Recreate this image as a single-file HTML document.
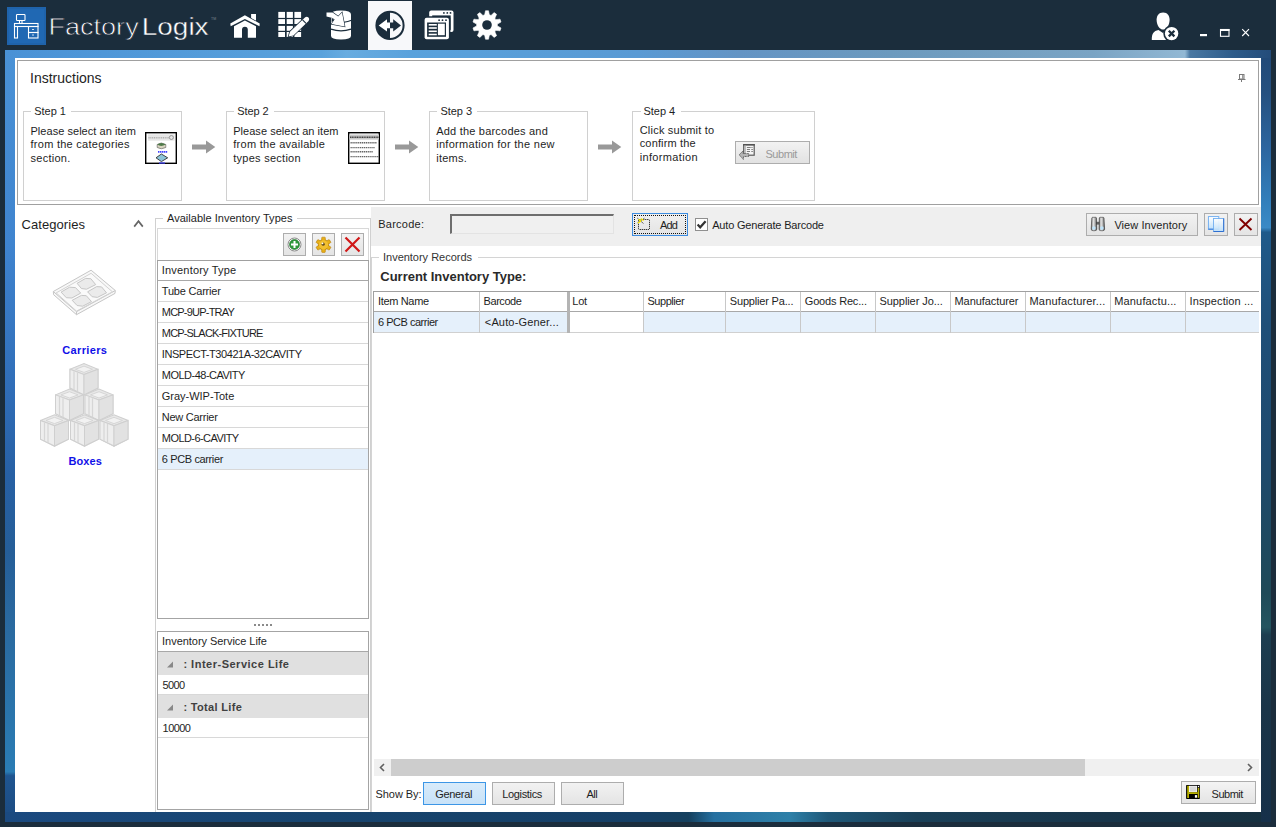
<!DOCTYPE html>
<html><head><meta charset="utf-8">
<style>
*{box-sizing:border-box;margin:0;padding:0}
html,body{width:1276px;height:827px;overflow:hidden;background:#1b2d3c;font-family:"Liberation Sans",sans-serif;font-size:11px;color:#1e1e1e;position:relative}
.a{position:absolute}
.t{position:absolute;white-space:nowrap;line-height:1}
svg{position:absolute;overflow:visible}
</style></head><body>
<div class="a" style="left:5px;top:50px;width:1266px;height:8px;background:linear-gradient(90deg,#4a92d6 0%,#5aa2dc 25%,#68ace0 27%,#5aa2dc 32%,#5a9ad4 50%,#6494c4 58%,#6c9abe 70%,#7aa4c4 86%,#92b8d4 93.2%,#4a78a2 93.6%,#2e5c8a 97%,#244c7a 100%)"></div>
<div class="a" style="left:5px;top:50px;width:10px;height:772px;background:linear-gradient(180deg,#4a92d6 0%,#3f84cf 25%,#2f6cb6 45%,#2760a4 55%,#255e98 65%,#2a6aa0 75%,#2a7cb4 93.5%,#1f5590 94%,#1b4a80 100%)"></div>
<div class="a" style="left:5px;top:812px;width:1266px;height:10px;background:linear-gradient(90deg,#1b4a80 0%,#17446e 25%,#153f66 50%,#15405e 54%,#2670a0 56%,#2e80a8 62%,#1f5878 65%,#1a4058 72%,#18354a 87%,#16303f 100%)"></div>
<div class="a" style="left:1261px;top:58px;width:10px;height:764px;background:linear-gradient(180deg,#224a78 0%,#25507f 4.5%,#2c66a0 12%,#3380bc 19%,#3a8ac6 22.2%,#1f5a8a 22.8%,#1f4f78 35%,#1e4a6e 52%,#1f4a58 70%,#245560 74.5%,#1d3e50 75.5%,#1a3548 85%,#16304a 100%)"></div>
<div class="a" style="left:15px;top:58px;width:1246px;height:754px;background:#fff"></div>
<!-- title bar -->
<svg class="a" style="left:0;top:0" width="1276" height="50" viewBox="0 0 1276 50">
 <rect x="7" y="7" width="39" height="38" fill="#1f63ab"/>
 <rect x="9" y="9" width="35" height="34" fill="#2068b3"/>
 <g fill="none" stroke="#fff" stroke-width="1.1">
  <rect x="16.5" y="14.5" width="8.5" height="6" rx="0.8"/>
  <path d="M19.5,20.5 v2.5 M22,20.5 v2.5"/>
  <rect x="14.5" y="23.5" width="23.5" height="3"/>
  <rect x="14.5" y="26.5" width="3" height="11.5"/>
  <rect x="28.5" y="26.5" width="9.5" height="6"/>
  <rect x="28.5" y="32.5" width="9.5" height="5.5"/>
 </g>
 <path d="M32,29.5 h2 M32,35 h2" stroke="#cfe0f0" stroke-width="1"/>
 <text transform="translate(48.4,35) scale(1.097,1)" font-family="Liberation Sans" font-size="24.7" fill="#ffffff" stroke="#1b2d3c" stroke-width="0.75" style="paint-order:fill stroke">Factory</text>
 <text transform="translate(141.7,35) scale(1.134,1)" font-family="Liberation Sans" font-size="24.7" fill="#ffffff" stroke="#1b2d3c" stroke-width="0.4" style="paint-order:fill stroke">Logix</text>
 <text x="211" y="20" font-family="Liberation Sans" font-size="3.5" fill="#7a8690">TM</text>
 <!-- home -->
 <g fill="#fff">
  <path d="M251.1,14 H256 V21.3 L251.1,18.5 Z"/>
  <path d="M230.3,23.4 L244.9,15.2 L259.7,23.6 L259.5,26.3 L244.9,18.9 L230.7,26.3 Z" stroke="#1b2d3c" stroke-width="1.3" style="paint-order:stroke fill"/>
  <path d="M234,26.3 L244.9,20.4 L256,26.3 L256,37.8 L247.8,37.8 L247.8,29.6 A2.9,2.9 0 0 0 242,29.6 L242,37.8 L234,37.8 Z"/>
 </g>
 <!-- grid edit -->
 <g fill="#fff">
  <rect x="278.3" y="11.9" width="6.7" height="6"/><rect x="286.7" y="11.9" width="6.2" height="6"/><rect x="294.4" y="11.9" width="6.7" height="6"/>
  <rect x="278.3" y="19.1" width="6.7" height="4.9"/><rect x="286.7" y="19.1" width="6.2" height="4.9"/><rect x="294.4" y="19.1" width="6.7" height="4.9"/>
  <rect x="278.3" y="25.9" width="6.7" height="4.9"/><rect x="286.7" y="25.9" width="6.2" height="4.9"/><rect x="294.4" y="25.9" width="6.7" height="4.9"/>
  <rect x="278.3" y="32" width="6.7" height="5"/><rect x="286.7" y="32" width="6.2" height="5"/><rect x="294.4" y="32" width="6.7" height="5"/>
 </g>
 <path d="M288.6,36.6 L290,31.8 L305.2,17.3 A2.5,2.5 0 0 1 308.6,20.9 L293.4,35.4 Z" fill="#fff" stroke="#1b2d3c" stroke-width="1.6" style="paint-order:stroke fill"/>
 <path d="M302.6,19.8 L306,23.3" stroke="#1b2d3c" stroke-width="1.1"/>
 <!-- db -->
 <path d="M331,14.2 Q331,10.4 341,10.4 Q351,10.4 351,14.2 V35.8 Q351,39.6 341,39.6 Q331,39.6 331,35.8 Z" fill="#fff"/>
 <path d="M331,29.1 Q341,32.6 351,29.1" stroke="#1b2d3c" stroke-width="1.3" fill="none"/>
 <path d="M343.8,22.3 Q348,21.8 351.5,20.3" stroke="#1b2d3c" stroke-width="1.1" fill="none"/>
 <path d="M326.5,12.6 L332.5,12.4 L338.2,16.6 L342,12.6 L344.7,26.6 L331.5,24.1 L334.6,19.6 L332.6,18 L326.5,16.4 Z" fill="#fff" stroke="#1b2d3c" stroke-width="1.2" style="paint-order:stroke fill"/>
 <path d="M331.6,18.6 L334.3,19.8 L331.6,22.4 Z" fill="#1b2d3c"/>
 <!-- active tab -->
 <rect x="368" y="1" width="44" height="49" fill="#f7f8fa"/>
 <circle cx="390" cy="25.4" r="13.6" fill="none" stroke="#1b2d3c" stroke-width="2"/>
 <path d="M390,11.8 A13.6,13.6 0 0 0 390,39 Z" fill="#1b2d3c"/>
 <path d="M378.7,25.4 L387,19.2 L387,22.6 L390,22.6 L390,28.2 L387,28.2 L387,31.6 Z" fill="#fff"/>
 <path d="M401,25.4 L393.2,19.2 L393.2,22.6 L390,22.6 L390,28.2 L393.2,28.2 L393.2,31.6 Z" fill="#1b2d3c"/>
 <!-- windows -->
 <path d="M431.2,10.4 H451.5 A2,2 0 0 1 453.5,12.4 V30 A2,2 0 0 1 451.5,32 H429.2 V12.4 A2,2 0 0 1 431.2,10.4 Z" fill="#fff"/>
 <rect x="432.2" y="15.4" width="18.5" height="14.5" fill="#1b2d3c"/>
 <circle cx="443.9" cy="12.9" r="0.9" fill="#1b2d3c"/><circle cx="447.3" cy="12.9" r="0.9" fill="#1b2d3c"/><circle cx="450.5" cy="12.9" r="0.9" fill="#1b2d3c"/>
 <rect x="423" y="16.2" width="27.4" height="24.6" rx="2.5" fill="#1b2d3c"/>
 <rect x="424.6" y="17.7" width="24.3" height="21.6" rx="2" fill="#fff"/>
 <rect x="427.1" y="22.5" width="18.9" height="14.3" fill="#1b2d3c"/>
 <circle cx="439.1" cy="20.2" r="0.9" fill="#1b2d3c"/><circle cx="442.5" cy="20.2" r="0.9" fill="#1b2d3c"/><circle cx="446" cy="20.2" r="0.9" fill="#1b2d3c"/>
 <g fill="#fff"><rect x="428.7" y="24" width="8.1" height="1.6"/><rect x="428.7" y="27.2" width="8.1" height="1.6"/><rect x="428.7" y="30.5" width="8.1" height="1.6"/><rect x="428.7" y="33.7" width="8.1" height="1.6"/><rect x="437.9" y="23.7" width="6.9" height="11.5"/></g>
 <!-- gear -->
 <path d="M484.66,14.87 L485.51,10.78 L488.49,10.78 L489.34,14.87 L491.06,15.43 L494.15,12.62 L496.57,14.37 L494.85,18.18 L495.91,19.64 L500.06,19.18 L500.99,22.03 L497.36,24.09 L497.36,25.91 L500.99,27.97 L500.06,30.82 L495.91,30.36 L494.85,31.82 L496.57,35.63 L494.15,37.38 L491.06,34.57 L489.34,35.13 L488.49,39.22 L485.51,39.22 L484.66,35.13 L482.94,34.57 L479.85,37.38 L477.43,35.63 L479.15,31.82 L478.09,30.36 L473.94,30.82 L473.01,27.97 L476.64,25.91 L476.64,24.09 L473.01,22.03 L473.94,19.18 L478.09,19.64 L479.15,18.18 L477.43,14.37 L479.85,12.62 L482.94,15.43 Z" fill="#fff" stroke="#fff" stroke-width="0.6" stroke-linejoin="round"/>
 <circle cx="487" cy="25" r="4.8" fill="#1b2d3c"/>
 <!-- user -->
 <g fill="#fff">
  <path d="M1163.1,12.6 C1167.6,12.6 1169.6,16 1169.6,20 C1169.6,25 1166.6,29.6 1163.1,29.6 C1159.6,29.6 1156.6,25 1156.6,20 C1156.6,16 1158.6,12.6 1163.1,12.6 Z"/>
  <path d="M1151.8,40 C1151.8,33.5 1153.5,31 1158.5,30 L1163,33 L1167.5,30 C1172,31 1174,33 1174,40 Z"/>
 </g>
 <circle cx="1171.6" cy="33.6" r="8.3" fill="#1b2d3c"/>
 <circle cx="1171.6" cy="33.6" r="6.7" fill="#fff"/>
 <path d="M1168.8,30.8 L1174.4,36.4 M1174.4,30.8 L1168.8,36.4" stroke="#1b2d3c" stroke-width="2.3"/>
 <!-- window controls -->
 <rect x="1200" y="34" width="7" height="2.2" fill="#fff"/>
 <rect x="1220.5" y="29.5" width="8.5" height="6.8" fill="none" stroke="#fff" stroke-width="1.1"/>
 <rect x="1220" y="29" width="9.5" height="2" fill="#fff"/>
 <path d="M1242.2,29.2 L1249,36 M1249,29.2 L1242.2,36" stroke="#fff" stroke-width="1.1"/>
</svg>
<div class="a" style="left:17px;top:60px;width:1242px;height:145px;border:1px solid #a0a0a0;"></div>
<div class="t" style="left:30.00px;top:71px;font-size:14px;color:#1e1e1e;letter-spacing:0.000px;">Instructions</div>
<svg style="left:1230px;top:55px" width="36" height="36" viewBox="1230 55 36 36"><rect x="1239.5" y="74.5" width="4.5" height="4.5" fill="#fff" stroke="#7a7a7a"/><rect x="1242" y="75" width="1.5" height="4" fill="#9a9a9a"/><rect x="1238" y="79" width="7.5" height="1" fill="#7a7a7a"/><rect x="1241" y="80" width="1" height="2" fill="#7a7a7a"/></svg>
<div class="a" style="left:23px;top:111px;width:159px;height:1px;background:#d0d0d0"></div>
<div class="a" style="left:23px;top:111px;width:1px;height:90px;background:#d0d0d0"></div>
<div class="a" style="left:181px;top:111px;width:1px;height:90px;background:#d0d0d0"></div>
<div class="a" style="left:23px;top:200px;width:159px;height:1px;background:#d0d0d0"></div>
<div class="a" style="left:31px;top:110px;width:40px;height:3px;background:#fff"></div>
<div class="t" style="left:34.30px;top:106px;font-size:11px;color:#1e1e1e;letter-spacing:-0.060px;">Step 1</div>
<div class="t" style="left:30.50px;top:126px;font-size:11px;color:#1e1e1e;letter-spacing:0.037px;">Please select an item</div>
<div class="t" style="left:30.50px;top:139px;font-size:11px;color:#1e1e1e;letter-spacing:0.269px;">from the categories</div>
<div class="t" style="left:30.50px;top:153px;font-size:11px;color:#1e1e1e;letter-spacing:0.257px;">section.</div>
<div class="a" style="left:226px;top:111px;width:159px;height:1px;background:#d0d0d0"></div>
<div class="a" style="left:226px;top:111px;width:1px;height:90px;background:#d0d0d0"></div>
<div class="a" style="left:384px;top:111px;width:1px;height:90px;background:#d0d0d0"></div>
<div class="a" style="left:226px;top:200px;width:159px;height:1px;background:#d0d0d0"></div>
<div class="a" style="left:234px;top:110px;width:40px;height:3px;background:#fff"></div>
<div class="t" style="left:237.20px;top:106px;font-size:11px;color:#1e1e1e;letter-spacing:-0.060px;">Step 2</div>
<div class="t" style="left:233.20px;top:126px;font-size:11px;color:#1e1e1e;letter-spacing:0.037px;">Please select an item</div>
<div class="t" style="left:233.20px;top:139px;font-size:11px;color:#1e1e1e;letter-spacing:0.285px;">from the available</div>
<div class="t" style="left:233.20px;top:153px;font-size:11px;color:#1e1e1e;letter-spacing:0.267px;">types section</div>
<div class="a" style="left:429px;top:111px;width:159px;height:1px;background:#d0d0d0"></div>
<div class="a" style="left:429px;top:111px;width:1px;height:90px;background:#d0d0d0"></div>
<div class="a" style="left:587px;top:111px;width:1px;height:90px;background:#d0d0d0"></div>
<div class="a" style="left:429px;top:200px;width:159px;height:1px;background:#d0d0d0"></div>
<div class="a" style="left:437px;top:110px;width:40px;height:3px;background:#fff"></div>
<div class="t" style="left:440.50px;top:106px;font-size:11px;color:#1e1e1e;letter-spacing:-0.060px;">Step 3</div>
<div class="t" style="left:436.20px;top:126px;font-size:11px;color:#1e1e1e;letter-spacing:0.208px;">Add the barcodes and</div>
<div class="t" style="left:436.20px;top:139px;font-size:11px;color:#1e1e1e;letter-spacing:0.293px;">information for the new</div>
<div class="t" style="left:436.20px;top:153px;font-size:11px;color:#1e1e1e;letter-spacing:0.270px;">items.</div>
<div class="a" style="left:632px;top:111px;width:183px;height:1px;background:#d0d0d0"></div>
<div class="a" style="left:632px;top:111px;width:1px;height:90px;background:#d0d0d0"></div>
<div class="a" style="left:814px;top:111px;width:1px;height:90px;background:#d0d0d0"></div>
<div class="a" style="left:632px;top:200px;width:183px;height:1px;background:#d0d0d0"></div>
<div class="a" style="left:641px;top:110px;width:40px;height:3px;background:#fff"></div>
<div class="t" style="left:643.60px;top:106px;font-size:11px;color:#1e1e1e;letter-spacing:-0.060px;">Step 4</div>
<div class="t" style="left:639.70px;top:125px;font-size:11px;color:#1e1e1e;letter-spacing:0.214px;">Click submit to</div>
<div class="t" style="left:639.70px;top:138px;font-size:11px;color:#1e1e1e;letter-spacing:0.160px;">confirm the</div>
<div class="t" style="left:639.70px;top:152px;font-size:11px;color:#1e1e1e;letter-spacing:0.340px;">information</div>
<svg style="left:192px;top:140px" width="24" height="14" viewBox="0 0 24 14"><path d="M0,4.5 H14 V0.5 L23.3,7 L14,13.5 V9.5 H0 Z" fill="#999"/></svg>
<svg style="left:395px;top:140px" width="24" height="14" viewBox="0 0 24 14"><path d="M0,4.5 H14 V0.5 L23.3,7 L14,13.5 V9.5 H0 Z" fill="#999"/></svg>
<svg style="left:598px;top:140px" width="24" height="14" viewBox="0 0 24 14"><path d="M0,4.5 H14 V0.5 L23.3,7 L14,13.5 V9.5 H0 Z" fill="#999"/></svg>
<svg style="left:145px;top:132px" width="32" height="32" viewBox="0 0 32 32">
<rect x="0.7" y="0.7" width="30.6" height="30.6" fill="#fff" stroke="#000" stroke-width="1.4"/>
<rect x="3" y="2.3" width="26.6" height="6.4" fill="#e6e6e6"/>
<path d="M3.5,5.8 H24" stroke="#b0b0b0" stroke-width="1.6" stroke-dasharray="1.1 0.7"/>
<circle cx="26.4" cy="5.5" r="2" fill="none" stroke="#888" stroke-width="0.8"/>
<path d="M12.2,12.5 Q16,9.5 20.8,12.5 L20.8,15.5 Q16,18 12.2,15.5 Z" fill="#d8d4c0" stroke="#555" stroke-width="0.6"/>
<path d="M12.2,12.5 Q16,9.3 20.8,12.5 Q16,15.3 12.2,12.5 Z" fill="#4f7a4a"/>
<path d="M13,19.8 H22.7" stroke="#4040ff" stroke-width="1.8" stroke-dasharray="1.4 0.5"/>
<path d="M11,25.8 L16.4,22 L22.7,25.8 L16.4,29.6 Z" fill="#8cc4d8" stroke="#333" stroke-width="0.9"/>
<path d="M14,31 H20" stroke="#4040ff" stroke-width="1.2"/>
</svg>
<svg style="left:348px;top:132px" width="32" height="32" viewBox="0 0 32 32">
<rect x="0.7" y="0.7" width="30.6" height="30.6" fill="#fff" stroke="#000" stroke-width="1.4"/>
<rect x="1.4" y="2.5" width="29.6" height="5.1" fill="#c8c8c8"/>
<path d="M2,5.2 H31" stroke="#444" stroke-width="1.5" stroke-dasharray="1.2 0.5"/>
<path d="M2.5,10.8 H28.7 M2.5,15.6 H27 M2.5,19.7 H25 M2.5,24.6 H31" stroke="#666" stroke-width="1.4" stroke-dasharray="1.3 0.6"/>
</svg>
<div class="a" style="left:735px;top:141px;width:75px;height:23px;border:1px solid #adadad;background:linear-gradient(#f2f2f2,#e2e2e2)"></div>
<svg style="left:734px;top:140px" width="26" height="26" viewBox="734 140 26 26">
<rect x="743.7" y="144.7" width="10.5" height="10.5" fill="#f4f4f4" stroke="#5a5a5a" stroke-width="1.2"/>
<rect x="743.1" y="144.1" width="11.7" height="1.4" fill="#505050"/>
<rect x="744.3" y="145.5" width="1.5" height="8" fill="#b0b0b0"/>
<path d="M746.9,147.5 H750.7 M751.4,147.5 H752.6 M746.9,149.5 H750 M751.3,149.5 H752.9 M746.9,151.5 H750 M751.3,151.5 H752.9" stroke="#707070" stroke-width="0.9"/>
<path d="M739.2,154.8 L743.1,150.8 V153.5 H748.6 V156.5 H743.4 V159.6 Z" fill="#b4b4b4" stroke="#404040" stroke-width="0.8" stroke-dasharray="0.9 0.6"/>
</svg>
<div class="t" style="left:765.50px;top:149px;font-size:11px;color:#9a9a9a;letter-spacing:-0.470px;">Submit</div>
<div class="t" style="left:21.50px;top:218px;font-size:13px;color:#1e1e1e;letter-spacing:0.072px;">Categories</div>
<svg style="left:133px;top:219px" width="12" height="9" viewBox="0 0 12 9"><path d="M1.2,7.6 L5.5,2.2 L9.8,7.6" fill="none" stroke="#666" stroke-width="1.7"/></svg>
<svg style="left:50px;top:266px" width="70" height="54" viewBox="50 266 70 54">
<g stroke="#c6c6c6" stroke-width="1" stroke-linejoin="round">
<path d="M53.3,291.5 L91.1,270.2 L115.3,290.5 L115,293.4 L76.5,314.7 L53.6,294.7 Z" fill="#f8f8f8"/>
<path d="M53.3,291.5 L76.5,311.7 L115.3,290.5" fill="none"/>
<path d="M76.5,311.7 V314.7" fill="none"/>
<path d="M56.2,292.9 L91.1,273.3 L112.4,291.8 L76.5,311.1 Z" fill="#fafafa" stroke="#d2d2d2"/>
<path d="M77.1,283.3 L85.6,278.4 L90.8,278.7 L95.7,284.6 L86.6,289.2 L81.4,288.5 Z" fill="#ebebeb"/>
<path d="M61.1,292.1 L69.6,287.2 L75.5,287.6 L80.7,293.1 L71.9,298 L66.3,297.7 Z" fill="#ebebeb"/>
<path d="M87.6,291.8 L96.7,286.6 L101.6,286.9 L106.5,292.8 L97.4,297.4 L92.1,296.7 Z" fill="#ebebeb"/>
<path d="M72.2,300.3 L81.4,295.4 L86.3,295.7 L91.5,301.6 L82.7,306.2 L77.1,305.5 Z" fill="#ebebeb"/>
</g>
</svg>
<div class="t" style="left:62.30px;top:345px;font-size:11px;color:#1010e8;font-weight:bold;letter-spacing:0.343px;transform:scaleY(1.05);transform-origin:0 100%">Carriers</div>
<svg style="left:39px;top:362px" width="92" height="88" viewBox="39 362 92 88"><g transform="translate(0,363) scale(1,1.045) translate(0,-363)"><g transform="translate(69.5,363)">
<path d="M0.5,6 L14.5,0.5 L28.5,6 L28.5,24 L14.5,30.5 L0.5,24 Z" fill="#e8e8e8" stroke="#cfcfcf" stroke-width="1"/>
<path d="M0.5,6 L14.5,11 L28.5,6" fill="none" stroke="#d0d0d0" stroke-width="1"/>
<path d="M14.5,11 V30.5" stroke="#d4d4d4" stroke-width="1"/>
<path d="M0.5,6 L14.5,11 L14.5,30.5 L0.5,24 Z" fill="#eeeeee" stroke="#cfcfcf" stroke-width="1"/>
<path d="M14.5,11 L28.5,6 L28.5,24 L14.5,30.5 Z" fill="#e2e2e2" stroke="#cfcfcf" stroke-width="1"/>
<path d="M4.5,8 V26 M8,9.3 V27.6" stroke="#d6d6d6" stroke-width="1.2"/>
<path d="M6,6 L14.5,3 L23,6 L14.5,9 Z" fill="#f2f2f2" stroke="#d0d0d0" stroke-width="0.8"/>
</g><g transform="translate(55,387.5)">
<path d="M0.5,6 L14.5,0.5 L28.5,6 L28.5,24 L14.5,30.5 L0.5,24 Z" fill="#e8e8e8" stroke="#cfcfcf" stroke-width="1"/>
<path d="M0.5,6 L14.5,11 L28.5,6" fill="none" stroke="#d0d0d0" stroke-width="1"/>
<path d="M14.5,11 V30.5" stroke="#d4d4d4" stroke-width="1"/>
<path d="M0.5,6 L14.5,11 L14.5,30.5 L0.5,24 Z" fill="#eeeeee" stroke="#cfcfcf" stroke-width="1"/>
<path d="M14.5,11 L28.5,6 L28.5,24 L14.5,30.5 Z" fill="#e2e2e2" stroke="#cfcfcf" stroke-width="1"/>
<path d="M4.5,8 V26 M8,9.3 V27.6" stroke="#d6d6d6" stroke-width="1.2"/>
<path d="M6,6 L14.5,3 L23,6 L14.5,9 Z" fill="#f2f2f2" stroke="#d0d0d0" stroke-width="0.8"/>
</g><g transform="translate(84.5,387.5)">
<path d="M0.5,6 L14.5,0.5 L28.5,6 L28.5,24 L14.5,30.5 L0.5,24 Z" fill="#e8e8e8" stroke="#cfcfcf" stroke-width="1"/>
<path d="M0.5,6 L14.5,11 L28.5,6" fill="none" stroke="#d0d0d0" stroke-width="1"/>
<path d="M14.5,11 V30.5" stroke="#d4d4d4" stroke-width="1"/>
<path d="M0.5,6 L14.5,11 L14.5,30.5 L0.5,24 Z" fill="#eeeeee" stroke="#cfcfcf" stroke-width="1"/>
<path d="M14.5,11 L28.5,6 L28.5,24 L14.5,30.5 Z" fill="#e2e2e2" stroke="#cfcfcf" stroke-width="1"/>
<path d="M4.5,8 V26 M8,9.3 V27.6" stroke="#d6d6d6" stroke-width="1.2"/>
<path d="M6,6 L14.5,3 L23,6 L14.5,9 Z" fill="#f2f2f2" stroke="#d0d0d0" stroke-width="0.8"/>
</g><g transform="translate(40,412)">
<path d="M0.5,6 L14.5,0.5 L28.5,6 L28.5,24 L14.5,30.5 L0.5,24 Z" fill="#e8e8e8" stroke="#cfcfcf" stroke-width="1"/>
<path d="M0.5,6 L14.5,11 L28.5,6" fill="none" stroke="#d0d0d0" stroke-width="1"/>
<path d="M14.5,11 V30.5" stroke="#d4d4d4" stroke-width="1"/>
<path d="M0.5,6 L14.5,11 L14.5,30.5 L0.5,24 Z" fill="#eeeeee" stroke="#cfcfcf" stroke-width="1"/>
<path d="M14.5,11 L28.5,6 L28.5,24 L14.5,30.5 Z" fill="#e2e2e2" stroke="#cfcfcf" stroke-width="1"/>
<path d="M4.5,8 V26 M8,9.3 V27.6" stroke="#d6d6d6" stroke-width="1.2"/>
<path d="M6,6 L14.5,3 L23,6 L14.5,9 Z" fill="#f2f2f2" stroke="#d0d0d0" stroke-width="0.8"/>
</g><g transform="translate(70,412)">
<path d="M0.5,6 L14.5,0.5 L28.5,6 L28.5,24 L14.5,30.5 L0.5,24 Z" fill="#e8e8e8" stroke="#cfcfcf" stroke-width="1"/>
<path d="M0.5,6 L14.5,11 L28.5,6" fill="none" stroke="#d0d0d0" stroke-width="1"/>
<path d="M14.5,11 V30.5" stroke="#d4d4d4" stroke-width="1"/>
<path d="M0.5,6 L14.5,11 L14.5,30.5 L0.5,24 Z" fill="#eeeeee" stroke="#cfcfcf" stroke-width="1"/>
<path d="M14.5,11 L28.5,6 L28.5,24 L14.5,30.5 Z" fill="#e2e2e2" stroke="#cfcfcf" stroke-width="1"/>
<path d="M4.5,8 V26 M8,9.3 V27.6" stroke="#d6d6d6" stroke-width="1.2"/>
<path d="M6,6 L14.5,3 L23,6 L14.5,9 Z" fill="#f2f2f2" stroke="#d0d0d0" stroke-width="0.8"/>
</g><g transform="translate(99.5,412)">
<path d="M0.5,6 L14.5,0.5 L28.5,6 L28.5,24 L14.5,30.5 L0.5,24 Z" fill="#e8e8e8" stroke="#cfcfcf" stroke-width="1"/>
<path d="M0.5,6 L14.5,11 L28.5,6" fill="none" stroke="#d0d0d0" stroke-width="1"/>
<path d="M14.5,11 V30.5" stroke="#d4d4d4" stroke-width="1"/>
<path d="M0.5,6 L14.5,11 L14.5,30.5 L0.5,24 Z" fill="#eeeeee" stroke="#cfcfcf" stroke-width="1"/>
<path d="M14.5,11 L28.5,6 L28.5,24 L14.5,30.5 Z" fill="#e2e2e2" stroke="#cfcfcf" stroke-width="1"/>
<path d="M4.5,8 V26 M8,9.3 V27.6" stroke="#d6d6d6" stroke-width="1.2"/>
<path d="M6,6 L14.5,3 L23,6 L14.5,9 Z" fill="#f2f2f2" stroke="#d0d0d0" stroke-width="0.8"/>
</g></g></svg>
<div class="t" style="left:68.50px;top:456px;font-size:11px;color:#1010e8;font-weight:bold;letter-spacing:0.075px;transform:scaleY(1.05);transform-origin:0 100%">Boxes</div>
<div class="a" style="left:155px;top:218px;width:8px;height:1px;background:#d0d0d0"></div>
<div class="a" style="left:297px;top:218px;width:74px;height:1px;background:#d0d0d0"></div>
<div class="a" style="left:155px;top:218px;width:1px;height:594px;background:#d0d0d0"></div>
<div class="a" style="left:370px;top:218px;width:1px;height:594px;background:#d0d0d0"></div>
<div class="t" style="left:167.00px;top:213px;font-size:11px;color:#1e1e1e;letter-spacing:0.019px;">Available Inventory Types</div>
<div class="a" style="left:157px;top:228px;width:212px;height:1px;background:#d8d8d8"></div>
<div class="a" style="left:157px;top:228px;width:1px;height:33px;background:#d8d8d8"></div>
<div class="a" style="left:368px;top:228px;width:1px;height:33px;background:#d8d8d8"></div>
<div class="a" style="left:283px;top:233px;width:23px;height:23px;border:1px solid #adadad;background:linear-gradient(#f2f2f2,#e4e4e4)"></div>
<div class="a" style="left:312px;top:233px;width:23px;height:23px;border:1px solid #adadad;background:linear-gradient(#f2f2f2,#e4e4e4)"></div>
<div class="a" style="left:341px;top:233px;width:23px;height:23px;border:1px solid #adadad;background:linear-gradient(#f2f2f2,#e4e4e4)"></div>
<svg style="left:287px;top:237px" width="15" height="15" viewBox="0 0 15 15">
<circle cx="7.5" cy="7.5" r="6.5" fill="#fff" stroke="#8a8a8a" stroke-width="1"/>
<circle cx="7.5" cy="7.5" r="5" fill="#2f9a3a" stroke="#1f6e28" stroke-width="0.6"/>
<path d="M7.5,4 V11 M4,7.5 H11" stroke="#fff" stroke-width="2"/>
</svg>
<svg style="left:315px;top:236px" width="17" height="17" viewBox="0 0 17 17">
<g transform="translate(8.5,8.8)"><g fill="#e8b018" stroke="#b88008" stroke-width="0.6">
<circle r="5.2"/><rect x="-1.8" y="-7.6" width="3.6" height="15.2" rx="0.6"/><rect x="-1.8" y="-7.6" width="3.6" height="15.2" rx="0.6" transform="rotate(60)"/><rect x="-1.8" y="-7.6" width="3.6" height="15.2" rx="0.6" transform="rotate(120)"/></g>
<circle r="4.6" fill="#f2c030"/><circle cx="-0.3" cy="-0.6" r="1.6" fill="#6a5020"/><circle cx="-1" cy="-1.5" r="0.9" fill="#fff"/></g>
</svg>
<svg style="left:344px;top:236px" width="17" height="17" viewBox="0 0 17 17">
<path d="M1.5,1.5 L15.5,15.5 M15.5,1.5 L1.5,15.5" stroke="#d01818" stroke-width="2.2"/>
</svg>
<div class="a" style="left:157px;top:260px;width:212px;height:359px;border:1px solid #a4a4a4;background:#fff"></div>
<div class="a" style="left:157px;top:260px;width:212px;height:1px;background:#a0a0a0"></div>
<div class="t" style="left:161.80px;top:265px;font-size:11px;color:#1e1e1e;letter-spacing:0.188px;">Inventory Type</div>
<div class="a" style="left:158px;top:280px;width:210px;height:1px;background:#a8a8a8"></div>
<div class="a" style="left:158px;top:301px;width:210px;height:1px;background:#d8d8d8"></div>
<div class="t" style="left:161.80px;top:286px;font-size:11px;color:#1e1e1e;letter-spacing:-0.205px;">Tube Carrier</div>
<div class="a" style="left:158px;top:322px;width:210px;height:1px;background:#d8d8d8"></div>
<div class="t" style="left:161.80px;top:307px;font-size:11px;color:#1e1e1e;letter-spacing:-0.791px;">MCP-9UP-TRAY</div>
<div class="a" style="left:158px;top:343px;width:210px;height:1px;background:#d8d8d8"></div>
<div class="t" style="left:161.80px;top:328px;font-size:11px;color:#1e1e1e;letter-spacing:-0.831px;">MCP-SLACK-FIXTURE</div>
<div class="a" style="left:158px;top:364px;width:210px;height:1px;background:#d8d8d8"></div>
<div class="t" style="left:161.80px;top:349px;font-size:11px;color:#1e1e1e;letter-spacing:-0.435px;">INSPECT-T30421A-32CAVITY</div>
<div class="a" style="left:158px;top:385px;width:210px;height:1px;background:#d8d8d8"></div>
<div class="t" style="left:161.80px;top:370px;font-size:11px;color:#1e1e1e;letter-spacing:-0.512px;">MOLD-48-CAVITY</div>
<div class="a" style="left:158px;top:406px;width:210px;height:1px;background:#d8d8d8"></div>
<div class="t" style="left:161.80px;top:391px;font-size:11px;color:#1e1e1e;letter-spacing:-0.021px;">Gray-WIP-Tote</div>
<div class="a" style="left:158px;top:427px;width:210px;height:1px;background:#d8d8d8"></div>
<div class="t" style="left:161.80px;top:412px;font-size:11px;color:#1e1e1e;letter-spacing:-0.260px;">New Carrier</div>
<div class="a" style="left:158px;top:448px;width:210px;height:1px;background:#d8d8d8"></div>
<div class="t" style="left:161.80px;top:433px;font-size:11px;color:#1e1e1e;letter-spacing:-0.562px;">MOLD-6-CAVITY</div>
<div class="a" style="left:158px;top:449px;width:210px;height:20px;background:#e5f0fb"></div>
<div class="a" style="left:158px;top:469px;width:210px;height:1px;background:#d8d8d8"></div>
<div class="t" style="left:161.80px;top:454px;font-size:11px;color:#1e1e1e;letter-spacing:-0.375px;">6 PCB carrier</div>
<div class="a" style="left:254px;top:624px;width:2px;height:2px;background:#8a8a8a"></div>
<div class="a" style="left:258px;top:624px;width:2px;height:2px;background:#8a8a8a"></div>
<div class="a" style="left:262px;top:624px;width:2px;height:2px;background:#8a8a8a"></div>
<div class="a" style="left:266px;top:624px;width:2px;height:2px;background:#8a8a8a"></div>
<div class="a" style="left:270px;top:624px;width:2px;height:2px;background:#8a8a8a"></div>
<div class="a" style="left:157px;top:631px;width:212px;height:179px;border:1px solid #a4a4a4;background:#fff"></div>
<div class="t" style="left:162.10px;top:636px;font-size:11px;color:#1e1e1e;letter-spacing:-0.043px;">Inventory Service Life</div>
<div class="a" style="left:158px;top:651px;width:210px;height:1px;background:#a8a8a8"></div>
<div class="a" style="left:158px;top:652px;width:210px;height:23px;background:#e0e0e0"></div>
<div class="a" style="left:158px;top:695px;width:210px;height:23px;background:#e0e0e0"></div>
<div class="a" style="left:158px;top:694px;width:210px;height:1px;background:#d8d8d8"></div>
<div class="a" style="left:158px;top:737px;width:210px;height:1px;background:#d8d8d8"></div>
<svg style="left:166px;top:661px" width="8" height="7" viewBox="0 0 8 7"><path d="M7,0.5 V6.5 H1 Z" fill="#888"/></svg>
<div class="t" style="left:183.40px;top:659px;font-size:11px;color:#404040;font-weight:bold;letter-spacing:0.505px;">: Inter-Service Life</div>
<div class="t" style="left:162.60px;top:680px;font-size:11px;color:#1e1e1e;letter-spacing:-0.683px;">5000</div>
<svg style="left:166px;top:704px" width="8" height="7" viewBox="0 0 8 7"><path d="M7,0.5 V6.5 H1 Z" fill="#888"/></svg>
<div class="t" style="left:183.40px;top:702px;font-size:11px;color:#404040;font-weight:bold;letter-spacing:0.336px;">: Total Life</div>
<div class="t" style="left:162.60px;top:723px;font-size:11px;color:#1e1e1e;letter-spacing:-0.575px;">10000</div>
<div class="a" style="left:371px;top:207px;width:890px;height:39px;background:#efefef"></div>
<div class="t" style="left:378.20px;top:219px;font-size:11px;color:#1e1e1e;letter-spacing:0.250px;">Barcode:</div>
<div class="a" style="left:450px;top:214px;width:164px;height:20px;background:#f0f0f0;border-top:2px solid #6e6e6e;border-left:2px solid #6e6e6e;border-right:1px solid #e3e3e3;border-bottom:1px solid #e3e3e3"></div>
<div class="a" style="left:632px;top:213px;width:56px;height:23px;border:1px solid #3c8ce0;background:linear-gradient(#f0f0f0,#e4e4e4)"></div>
<div class="a" style="left:634px;top:215px;width:52px;height:19px;border:1px dotted #111"></div>
<svg style="left:630px;top:210px" width="30" height="28" viewBox="630 210 30 28">
<rect x="638.5" y="219.5" width="11" height="10" rx="0.8" fill="none" stroke="#000" stroke-width="1" stroke-dasharray="1 1"/>
<path d="M637.2,218 L643.5,223.5 M637.5,222.8 L644.5,218.2" stroke="#333" stroke-width="0.7"/>
<path d="M638.5,219.3 L641.2,221.6 M640.8,218.5 L643.6,220.5 M637.8,223 L640.5,221.5" stroke="#ffee00" stroke-width="1.4"/>
</svg>
<div class="t" style="left:660.00px;top:220px;font-size:11px;color:#1e1e1e;letter-spacing:-0.875px;">Add</div>
<div class="a" style="left:695px;top:218px;width:13px;height:13px;border:1px solid #8f8f8f;background:#fff"></div>
<svg style="left:696px;top:219px" width="11" height="11" viewBox="0 0 11 11"><path d="M1.6,5.6 L4.2,8.3 L9.6,2.2" fill="none" stroke="#333" stroke-width="2.2"/></svg>
<div class="t" style="left:712.20px;top:220px;font-size:11px;color:#1e1e1e;letter-spacing:-0.190px;">Auto Generate Barcode</div>
<div class="a" style="left:1086px;top:213px;width:112px;height:23px;border:1px solid #adadad;background:linear-gradient(#f2f2f2,#e4e4e4)"></div>
<svg style="left:1086px;top:212px" width="24" height="24" viewBox="1086 212 24 24">
<defs><linearGradient id="bg1" x1="0" x2="1"><stop offset="0" stop-color="#5a5a5a"/><stop offset="0.35" stop-color="#e8e8e8"/><stop offset="0.7" stop-color="#b0b0b0"/><stop offset="1" stop-color="#3a3a3a"/></linearGradient></defs>
<rect x="1096" y="221.8" width="4" height="2.8" fill="#666"/>
<path d="M1092.6,217.3 H1095.6 Q1096.4,217.3 1096.5,218.3 L1096.8,229 Q1096.8,230.7 1095,230.7 H1093 Q1091.2,230.7 1091.2,229 L1091.8,218.3 Q1091.9,217.3 1092.6,217.3 Z" fill="url(#bg1)" stroke="#3a3a3a" stroke-width="0.6"/>
<path d="M1100.2,217.3 H1103.2 Q1103.9,217.3 1104,218.3 L1104.6,229 Q1104.6,230.7 1102.8,230.7 H1100.8 Q1099,230.7 1099,229 L1099.3,218.3 Q1099.4,217.3 1100.2,217.3 Z" fill="url(#bg1)" stroke="#3a3a3a" stroke-width="0.6"/>
<circle cx="1093.9" cy="228.1" r="1.8" fill="#bfe4fa"/><circle cx="1101.9" cy="228.1" r="1.8" fill="#bfe4fa"/>
</svg>
<div class="t" style="left:1114.40px;top:220px;font-size:11px;color:#1e1e1e;letter-spacing:0.073px;">View Inventory</div>
<div class="a" style="left:1204px;top:213px;width:24px;height:23px;border:1px solid #adadad;background:linear-gradient(#f2f2f2,#e4e4e4)"></div>
<svg style="left:1204px;top:212px" width="24" height="24" viewBox="1204 212 24 24">
<defs><linearGradient id="cg1" x1="0" y1="0" x2="0" y2="1"><stop offset="0" stop-color="#ffffff"/><stop offset="1" stop-color="#bfe0fa"/></linearGradient></defs>
<rect x="1208.4" y="216.6" width="10.4" height="12.8" fill="url(#cg1)" stroke="#6aaaf0" stroke-width="0.9"/>
<rect x="1208.4" y="228.6" width="10.4" height="1" fill="#3a7ad8"/>
<rect x="1213.5" y="218.5" width="10.2" height="13" fill="url(#cg1)" stroke="#6aaaf0" stroke-width="0.9" opacity="0.92"/>
<path d="M1223.7,218.5 V231.5 H1213.5" fill="none" stroke="#2f6fd0" stroke-width="1"/>
</svg>
<div class="a" style="left:1234px;top:213px;width:24px;height:23px;border:1px solid #adadad;background:linear-gradient(#f2f2f2,#e4e4e4)"></div>
<svg style="left:1237px;top:216px" width="17" height="17" viewBox="0 0 17 17"><path d="M2.5,2.5 L14.5,14 M14.5,2.5 L2.5,14" stroke="#800000" stroke-width="1.9"/></svg>
<div class="a" style="left:371px;top:257px;width:8px;height:1px;background:#d4d4d4"></div>
<div class="a" style="left:478px;top:257px;width:783px;height:1px;background:#d4d4d4"></div>
<div class="a" style="left:371px;top:257px;width:1px;height:555px;background:#d4d4d4"></div>
<div class="t" style="left:383.00px;top:252px;font-size:11px;color:#333;letter-spacing:-0.016px;">Inventory Records</div>
<div class="t" style="left:380.30px;top:270px;font-size:13px;color:#2a2a2a;font-weight:bold;letter-spacing:-0.014px;">Current Inventory Type:</div>
<div class="a" style="left:373px;top:291px;width:886px;height:1px;background:#a0a0a0"></div>
<div class="a" style="left:373px;top:291px;width:1px;height:42px;background:#a0a0a0"></div>
<div class="a" style="left:374px;top:311px;width:885px;height:1px;background:#a8a8a8"></div>
<div class="a" style="left:374px;top:312px;width:885px;height:20px;background:#e5f0fb"></div>
<div class="a" style="left:568px;top:312px;width:75px;height:20px;background:#fff"></div>
<div class="a" style="left:374px;top:332px;width:885px;height:1px;background:#d0d0d0"></div>
<div class="a" style="left:479px;top:292px;width:1px;height:41px;background:#c8c8c8"></div>
<div class="a" style="left:567px;top:292px;width:3px;height:41px;background:#b4b4b4"></div>
<div class="a" style="left:643px;top:292px;width:1px;height:41px;background:#c8c8c8"></div>
<div class="a" style="left:725px;top:292px;width:1px;height:41px;background:#c8c8c8"></div>
<div class="a" style="left:800px;top:292px;width:1px;height:41px;background:#c8c8c8"></div>
<div class="a" style="left:875px;top:292px;width:1px;height:41px;background:#c8c8c8"></div>
<div class="a" style="left:950px;top:292px;width:1px;height:41px;background:#c8c8c8"></div>
<div class="a" style="left:1025px;top:292px;width:1px;height:41px;background:#c8c8c8"></div>
<div class="a" style="left:1110px;top:292px;width:1px;height:41px;background:#c8c8c8"></div>
<div class="a" style="left:1185px;top:292px;width:1px;height:41px;background:#c8c8c8"></div>
<div class="t" style="left:378.00px;top:296px;font-size:11px;color:#1e1e1e;letter-spacing:-0.337px;">Item Name</div>
<div class="t" style="left:483.60px;top:296px;font-size:11px;color:#1e1e1e;letter-spacing:-0.458px;">Barcode</div>
<div class="t" style="left:572.30px;top:296px;font-size:11px;color:#1e1e1e;letter-spacing:-0.250px;">Lot</div>
<div class="t" style="left:647.50px;top:296px;font-size:11px;color:#1e1e1e;letter-spacing:-0.464px;">Supplier</div>
<div class="t" style="left:729.80px;top:296px;font-size:11px;color:#1e1e1e;letter-spacing:-0.181px;">Supplier Pa...</div>
<div class="t" style="left:804.80px;top:296px;font-size:11px;color:#1e1e1e;letter-spacing:-0.182px;">Goods Rec...</div>
<div class="t" style="left:879.50px;top:296px;font-size:11px;color:#1e1e1e;letter-spacing:-0.077px;">Supplier Jo...</div>
<div class="t" style="left:954.50px;top:296px;font-size:11px;color:#1e1e1e;letter-spacing:-0.073px;">Manufacturer</div>
<div class="t" style="left:1029.50px;top:296px;font-size:11px;color:#1e1e1e;letter-spacing:0.175px;">Manufacturer...</div>
<div class="t" style="left:1114.30px;top:296px;font-size:11px;color:#1e1e1e;letter-spacing:0.141px;">Manufactu...</div>
<div class="t" style="left:1189.60px;top:296px;font-size:11px;color:#1e1e1e;letter-spacing:0.104px;">Inspection ...</div>
<div class="t" style="left:378.00px;top:317px;font-size:11px;color:#1e1e1e;letter-spacing:-0.483px;">6 PCB carrier</div>
<div class="t" style="left:484.80px;top:317px;font-size:11px;color:#1e1e1e;letter-spacing:0.158px;">&lt;Auto-Gener...</div>
<div class="a" style="left:374px;top:759px;width:885px;height:17px;background:#f0f0f0"></div>
<div class="a" style="left:391px;top:759px;width:694px;height:17px;background:#cdcdcd"></div>
<svg style="left:378px;top:763px" width="9" height="9" viewBox="0 0 9 9"><path d="M6,1 L2.5,4.5 L6,8" fill="none" stroke="#606060" stroke-width="1.6"/></svg>
<svg style="left:1245px;top:763px" width="9" height="9" viewBox="0 0 9 9"><path d="M3,1 L6.5,4.5 L3,8" fill="none" stroke="#606060" stroke-width="1.6"/></svg>
<div class="t" style="left:375.50px;top:789px;font-size:11px;color:#1e1e1e;letter-spacing:-0.050px;">Show By:</div>
<div class="a" style="left:423px;top:782px;width:63px;height:23px;border:1px solid #3c96e6;background:linear-gradient(#d8ebfa,#c8e2f8)"></div>
<div class="t" style="left:435.20px;top:789px;font-size:11px;color:#1e1e1e;letter-spacing:-0.308px;">General</div>
<div class="a" style="left:492px;top:782px;width:63px;height:23px;border:1px solid #adadad;background:linear-gradient(#f2f2f2,#e4e4e4)"></div>
<div class="t" style="left:502.20px;top:789px;font-size:11px;color:#1e1e1e;letter-spacing:-0.337px;">Logistics</div>
<div class="a" style="left:561px;top:782px;width:63px;height:23px;border:1px solid #adadad;background:linear-gradient(#f2f2f2,#e4e4e4)"></div>
<div class="t" style="left:586.60px;top:789px;font-size:11px;color:#1e1e1e;letter-spacing:-0.600px;">All</div>
<div class="a" style="left:1181px;top:781px;width:75px;height:23px;border:1px solid #adadad;background:linear-gradient(#f4f4f4,#e4e4e4)"></div>
<svg style="left:1182px;top:780px" width="24" height="24" viewBox="1182 780 24 24">
<rect x="1186.1" y="784.9" width="13.8" height="14" rx="0.6" fill="#000"/>
<rect x="1187.2" y="785.8" width="1.8" height="12.2" fill="#b8b000"/>
<rect x="1197.8" y="787.8" width="1.4" height="10" fill="#b8b000"/>
<rect x="1189" y="785.8" width="8.1" height="6.4" fill="#fff"/>
<rect x="1189.6" y="786.4" width="6.9" height="5.2" fill="#d8d8d8"/>
<rect x="1189" y="792.2" width="8.8" height="1.8" fill="#b8b000"/>
<rect x="1194.9" y="795.1" width="2.2" height="2.6" fill="#fff"/>
<circle cx="1198.5" cy="786.5" r="0.7" fill="#fff"/>
</svg>
<div class="t" style="left:1211.60px;top:789px;font-size:11px;color:#1e1e1e;letter-spacing:-0.490px;">Submit</div>
</body></html>
